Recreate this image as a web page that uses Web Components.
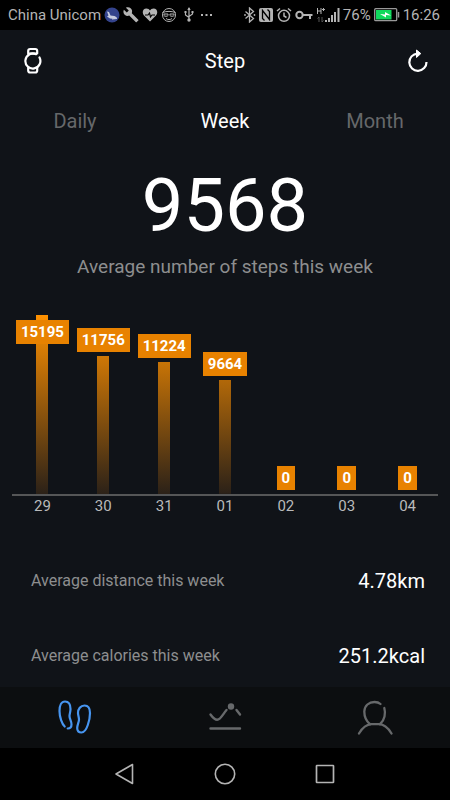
<!DOCTYPE html>
<html lang="en">
<head>
<meta charset="utf-8">
<meta name="viewport" content="width=device-width, initial-scale=1">
<title>Step</title>
<style>
  html, body {
    margin: 0;
    height: 100%;
    background: #101318;
    font-family: Roboto, "Liberation Sans", sans-serif;
  }
</style>
</head>
<body>
<step-app></step-app>

<script>
// name: [width, height, markup]
const ICONS = {
  horse: [16, 16, `<circle cx="8" cy="8" r="7.500" fill="#34438c"/>
    <path d="M3 4.500l2 .5 1.500 3.500 4 .5 2.500 1.500-2 1.500-5-.5-3-2 1.500-1z" fill="#c8cce0"/><path d="M8 12l5-.5" stroke="#c8cce0"/>`],
  wrench: [16, 16, `<path d="M15.300 12.700L8.800 6.200C9.500 4.500 9.100 2.800 7.900 1.600 6.500.3 4.500 0 2.900.8l2.900 2.700-2 2L.9 2.700C0 4.300.4 6.400 1.700 7.700c1.300 1.200 3 1.500 4.500.9l6.500 6.500c.3.300.8.300 1 0l1.600-1.500c.3-.3.300-.7 0-.9z" fill="currentColor"/>`],
  heart: [16, 16, `<path d="M8 14.500L2 8.500C-.5 5.500 1 1.500 4.400 1.500 6 1.500 7.300 2.300 8 3.500 8.700 2.300 10 1.500 11.600 1.500 15 1.500 16.500 5.500 14 8.500z" fill="currentColor"/>
    <path d="M3 8h3l1.500-2L8.500 10l1.500-2h3" stroke="#000" stroke-width="1.200" fill="none"/>`],
  face: [16, 16, `<g fill="none" stroke="currentColor"><circle cx="8" cy="8" r="6.500"/><path d="M1.500 5.500c4-1.500 9-1.500 13 0M3 7h4v1.500c0 1-4 1-4 0zM9 7h4v1.500c0 1-4 1-4 0zM5 11.500c2 1.500 4 1.500 6 0"/></g>`],
  usb: [10, 16, `<path d="M5 1v11M1.500 5v3L5 10.500M8.500 5v2L5 9.500" fill="none" stroke="currentColor" stroke-width="1.200"/>
    <path d="M5 0L3.300 3h3.400zM.5 4h2v2h-2zM7.500 4h2v2h-2z" fill="currentColor"/><circle cx="5" cy="13" r="1.700" fill="currentColor"/>`],
  more: [12, 16, `<g fill="currentColor"><rect y="7" width="2" height="2"/><rect x="4.500" y="7" width="2" height="2"/><rect x="9" y="7" width="2" height="2"/></g>`],
  bluetooth: [12, 16, `<path d="M1.500 4.500l8 7-4 3.500V1l4 3.500-8 7" fill="none" stroke="currentColor" stroke-width="1.300"/><circle cx="1" cy="8" r=".9" fill="currentColor"/><circle cx="10.500" cy="8" r=".9" fill="currentColor"/>`],
  nfc: [14, 16, `<path d="M2 1h10q2 0 2 2v10q0 2-2 2H2q-2 0-2-2V3q0-2 2-2z" fill="currentColor"/><path d="M5.500 13.500L3.500 11.500V3.500L10.500 12.500V4.500L8.500 2.500" fill="none" stroke="#000" stroke-width="1.300"/>`],
  alarm: [16, 16, `<g fill="none" stroke="currentColor" stroke-width="1.500"><circle cx="8" cy="8.800" r="5.500"/><path d="M8 5.500V9l2.500 1.500M1 4l3-2.500M15 4l-3-2.500"/></g>`],
  key: [18, 16, `<g fill="none" stroke="currentColor" stroke-width="2"><circle cx="4.500" cy="8" r="3.200"/><path d="M8 8h9.500M15 8v4"/></g>`],
  signal: [24, 16, `<path d="M1.500 1v6M5 1v6M1.500 4H5M6 2.500h3M7.500 1v3" stroke="currentColor" fill="none"/>
    <path d="M3 10v5M1.500 11.500L3 10M6 10v5l1.500-1.500" stroke="#555" fill="none"/>
    <path d="M9 13h2v2H9zM12 11h2v4h-2zM15 8h2v7h-2zM18 5h2v10h-2zM21.500 1h2v14h-2z" fill="currentColor"/>`],
  battery: [26, 14, `<rect x=".7" y=".7" width="22" height="12" rx="1" fill="none" stroke="#999" stroke-width="1.300"/>
    <rect x="2" y="2" width="15.500" height="9.500" fill="#10d95c"/><path d="M24.500 4v5.500" stroke="#999" stroke-width="1.500"/>
    <path d="M6 6l5 .5V4l6 3.500-5-.5v2.500z" fill="#fff"/>`],
  watch: [18, 28, `<g fill="none" stroke="currentColor" stroke-width="2.200" stroke-linecap="round" stroke-linejoin="round">
    <path d="M12 7.200A7.500 7.500 0 1 0 15.500 10.500"/>
    <path d="M4.200 7V4q0-2 2-2h5q2 0 2 2v2.500M4.200 20.500v3q0 2 2 2h5q2 0 2-2v-3M5 6.700h7"/></g>`],
  refresh: [20, 24, `<path d="M18.500 13A8.600 8.600 0 1 1 9.500 4.600" fill="none" stroke="currentColor" stroke-width="2.200"/>
    <path d="M8.500 1L12.800 4.600 8.500 8.500z" fill="currentColor" stroke="currentColor" stroke-linejoin="round"/>`],
  feet: [34, 35, `<g fill="none" stroke="currentColor" stroke-width="2.200" stroke-linecap="round">
    <path d="M6.700 26.500C4 24 1.500 17 1.500 11 1.500 5 3.500 1.500 7 1.500c4 0 5.500 3.500 5.500 7.500 0 3-1 5-1 7 0 3 2 5 2 8.500 0 2.500-1.500 4-3.800 4"/>
    <path d="M26.500 5.500c4 0 5.500 3.500 5.500 7.500 0 6-3 19.500-8.500 19.500-3 0-4.300-2-4.300-4.500 0-3 1.800-6 1.800-8.500s-1-4.500-1-6.500c0-4 2.500-7.500 6.500-7.500z"/></g>`],
  activity: [34, 35, `<g fill="none" stroke="currentColor" stroke-width="2.400" stroke-linecap="round">
    <path d="M2.500 14.500C5 18 7 19.800 9.200 19.800c3.300 0 5.800-5.800 9.300-9.800M28.500 10l3.500 4.500M2.500 28.500H32"/></g>
    <circle cx="23" cy="6.500" r="3.200" fill="currentColor"/>`],
  person: [36, 35, `<g fill="none" stroke="currentColor" stroke-width="2.300" stroke-linecap="round">
    <path d="M27.300 8c1.500 5 .5 12-4.300 16.200M13 24.200C8.500 20.500 7.300 16 7.300 11.500 7.500 5.500 12 2 17.500 2c2.500 0 4.500.7 6 2"/>
    <path d="M2 33.500c3-5 7-9 12.500-9.300h7c6 0 10 4.300 13 9.300"/></g>`],
  back: [22, 22, `<path d="M2 11L18.500 1.500v19z" fill="none" stroke="currentColor" stroke-width="1.600" stroke-linejoin="round"/>`],
  home: [22, 22, `<circle cx="11" cy="11" r="9.700" fill="none" stroke="currentColor" stroke-width="1.600"/>`],
  recent: [22, 22, `<rect x="2.500" y="2.500" width="17" height="17" rx=".5" fill="none" stroke="currentColor" stroke-width="1.700"/>`]
};

class AppIcon extends HTMLElement {
  constructor() {
    super();
    this.attachShadow({ mode: "open" });
  }

  connectedCallback() {
    const [w, h, markup] = ICONS[this.getAttribute("name")];
    this.shadowRoot.innerHTML = `
      <style>
        :host { display: block; flex: none; }
        svg { display: block; }
      </style>
      <svg width="${w}" height="${h}" viewBox="0 0 ${w} ${h}" aria-hidden="true">${markup}</svg>
    `;
  }
}
customElements.define("app-icon", AppIcon);

class StatusBar extends HTMLElement {
  constructor() {
    super();
    this.attachShadow({ mode: "open" }).innerHTML = `
      <style>
        :host {
          display: flex;
          justify-content: space-between;
          align-items: center;
          height: 30px;
          padding: 0 10px 0 8px;
          background: #000;
          color: #b4b4b4;
          font-size: 15px;
          white-space: nowrap;
        }
        div { display: flex; align-items: center; gap: 3px; }
        [name="usb"] { margin: 0 4px; }
      </style>
      <div>
        <span>China Unicom</span>
        <app-icon name="horse"></app-icon>
        <app-icon name="wrench"></app-icon>
        <app-icon name="heart"></app-icon>
        <app-icon name="face"></app-icon>
        <app-icon name="usb"></app-icon>
        <app-icon name="more"></app-icon>
      </div>
      <div>
        <app-icon name="bluetooth"></app-icon>
        <app-icon name="nfc"></app-icon>
        <app-icon name="alarm"></app-icon>
        <app-icon name="key"></app-icon>
        <app-icon name="signal"></app-icon>
        <span>76%</span>
        <app-icon name="battery"></app-icon>
        <span>16:26</span>
      </div>
    `;
  }
}
customElements.define("status-bar", StatusBar);

class TitleBar extends HTMLElement {
  constructor() {
    super();
    this.attachShadow({ mode: "open" }).innerHTML = `
      <style>
        :host {
          display: flex;
          justify-content: space-between;
          align-items: center;
          height: 62px;
          padding: 0 22px 0 24px;
          color: #fff;
        }
        h1 { margin: 0; font-size: 20px; font-weight: 400; }
        button { padding: 0; border: 0; background: none; color: inherit; }
      </style>
      <button aria-label="Device"><app-icon name="watch"></app-icon></button>
      <h1><slot></slot></h1>
      <button aria-label="Refresh"><app-icon name="refresh"></app-icon></button>
    `;
  }
}
customElements.define("title-bar", TitleBar);

class PeriodTabs extends HTMLElement {
  constructor() {
    super();
    this.attachShadow({ mode: "open" }).innerHTML = `
      <style>
        :host { display: flex; height: 58px; }
        button {
          flex: 1;
          padding: 0;
          border: 0;
          background: none;
          color: #66686a;
          font: inherit;
          font-size: 20px;
        }
        button[aria-selected="true"] { color: #fff; }
      </style>
      <button role="tab" aria-selected="false">Daily</button>
      <button role="tab" aria-selected="true">Week</button>
      <button role="tab" aria-selected="false">Month</button>
    `;
  }
}
customElements.define("period-tabs", PeriodTabs);

class StepSummary extends HTMLElement {
  constructor() {
    super();
    this.attachShadow({ mode: "open" }).innerHTML = `
      <style>
        :host { display: block; padding-top: 12px; text-align: center; }
        p { margin: 0; }
        .value { color: #fff; font-size: 74px; line-height: 88px; }
        .caption { margin-top: 4px; color: #8d8e8f; font-size: 19px; line-height: 26px; }
      </style>
      <p class="value"><slot name="value"></slot></p>
      <p class="caption"><slot></slot></p>
    `;
  }
}
customElements.define("step-summary", StepSummary);

class BarChart extends HTMLElement {
  constructor() {
    super();
    this.shadowDOM = this.attachShadow({ mode: "open" });
  }

  set days(days) {
    this._days = days;
    this.render();
  }

  render() {
    const max = Math.max(...this._days.map(day => day.steps));
    const bars = this._days.map(day => `
      <div class="slot" style="--h: ${day.steps / max * 100}%">
        <div class="bar"></div>
        <span class="tag">${day.steps}</span>
      </div>`).join("");
    const labels = this._days.map(day => `<span>${day.label}</span>`).join("");
    this.shadowDOM.innerHTML = `
      <style>
        :host { display: block; padding: 35px 12px 0; }
        .plot, .labels { display: flex; }
        .plot { height: 179px; border-bottom: 2px solid #555657; }
        .slot {
          position: relative;
          flex: 1;
          display: flex;
          justify-content: center;
          align-items: flex-end;
        }
        /* the gradient spans the whole plot, so short bars start darker */
        .bar {
          width: 12px;
          height: var(--h);
          background: linear-gradient(to top, #2b2118, #ff9100) bottom / 100% 179px no-repeat;
        }
        .tag {
          position: absolute;
          bottom: min(calc(var(--h) + 4px), calc(100% - 29px));
          padding: 0 5px;
          background: #e88200;
          color: #fff;
          font-size: 15px;
          font-weight: 700;
          line-height: 24px;
        }
        .labels span {
          flex: 1;
          text-align: center;
          color: #b9babb;
          font-size: 15px;
          line-height: 20px;
        }
      </style>
      <div class="plot">${bars}</div>
      <div class="labels">${labels}</div>
    `;
  }
}
customElements.define("bar-chart", BarChart);

class StatRow extends HTMLElement {
  constructor() {
    super();
    this.attachShadow({ mode: "open" }).innerHTML = `
      <style>
        :host {
          display: flex;
          justify-content: space-between;
          align-items: center;
          height: 63px;
          padding: 0 25px 0 31px;
          color: #8d8e8f;
          font-size: 16px;
        }
        .value { color: #fff; font-size: 20px; }
      </style>
      <span><slot></slot></span>
      <span class="value"><slot name="value"></slot></span>
    `;
  }
}
customElements.define("stat-row", StatRow);

class IconNav extends HTMLElement {
  constructor() {
    super();
    this.attachShadow({ mode: "open" }).innerHTML = `
      <style>
        :host { display: block; }
        nav { display: flex; justify-content: center; height: 100%; }
        ::slotted(button) {
          flex: 1;
          display: flex;
          justify-content: center;
          align-items: center;
          max-width: var(--item-width, none);
          padding: 0;
          border: 0;
          background: none;
          color: inherit;
        }
        ::slotted(button[aria-current]) { color: #4795f0; }
      </style>
      <nav><slot></slot></nav>
    `;
  }
}
customElements.define("icon-nav", IconNav);

class StepApp extends HTMLElement {
  constructor() {
    super();
    this.attachShadow({ mode: "open" }).innerHTML = `
      <style>
        :host { display: flex; flex-direction: column; min-height: 100%; }
        main { flex: 1; }
        .stats { display: flex; flex-direction: column; gap: 12px; padding-top: 33px; }
        .tabs { height: 61px; background: #0c0e10; color: #67696b; }
        .system { height: 52px; background: #000; color: #b4b4b4; --item-width: 100px; }
      </style>
      <status-bar></status-bar>
      <main>
        <title-bar>Step</title-bar>
        <period-tabs role="tablist"></period-tabs>
        <step-summary><span slot="value">9568</span>Average number of steps this week</step-summary>
        <bar-chart></bar-chart>
        <div class="stats">
          <stat-row>Average distance this week<span slot="value">4.78km</span></stat-row>
          <stat-row>Average calories this week<span slot="value">251.2kcal</span></stat-row>
        </div>
      </main>
      <icon-nav class="tabs">
        <button aria-label="Steps" aria-current="page"><app-icon name="feet"></app-icon></button>
        <button aria-label="Activity"><app-icon name="activity"></app-icon></button>
        <button aria-label="Profile"><app-icon name="person"></app-icon></button>
      </icon-nav>
      <icon-nav class="system">
        <button aria-label="Back"><app-icon name="back"></app-icon></button>
        <button aria-label="Home"><app-icon name="home"></app-icon></button>
        <button aria-label="Recent apps"><app-icon name="recent"></app-icon></button>
      </icon-nav>
    `;
    this.shadowRoot.querySelector("bar-chart").days = [
      { label: "29", steps: 15195 },
      { label: "30", steps: 11756 },
      { label: "31", steps: 11224 },
      { label: "01", steps: 9664 },
      { label: "02", steps: 0 },
      { label: "03", steps: 0 },
      { label: "04", steps: 0 }
    ];
  }
}
customElements.define("step-app", StepApp);
</script>
</body>
</html>
